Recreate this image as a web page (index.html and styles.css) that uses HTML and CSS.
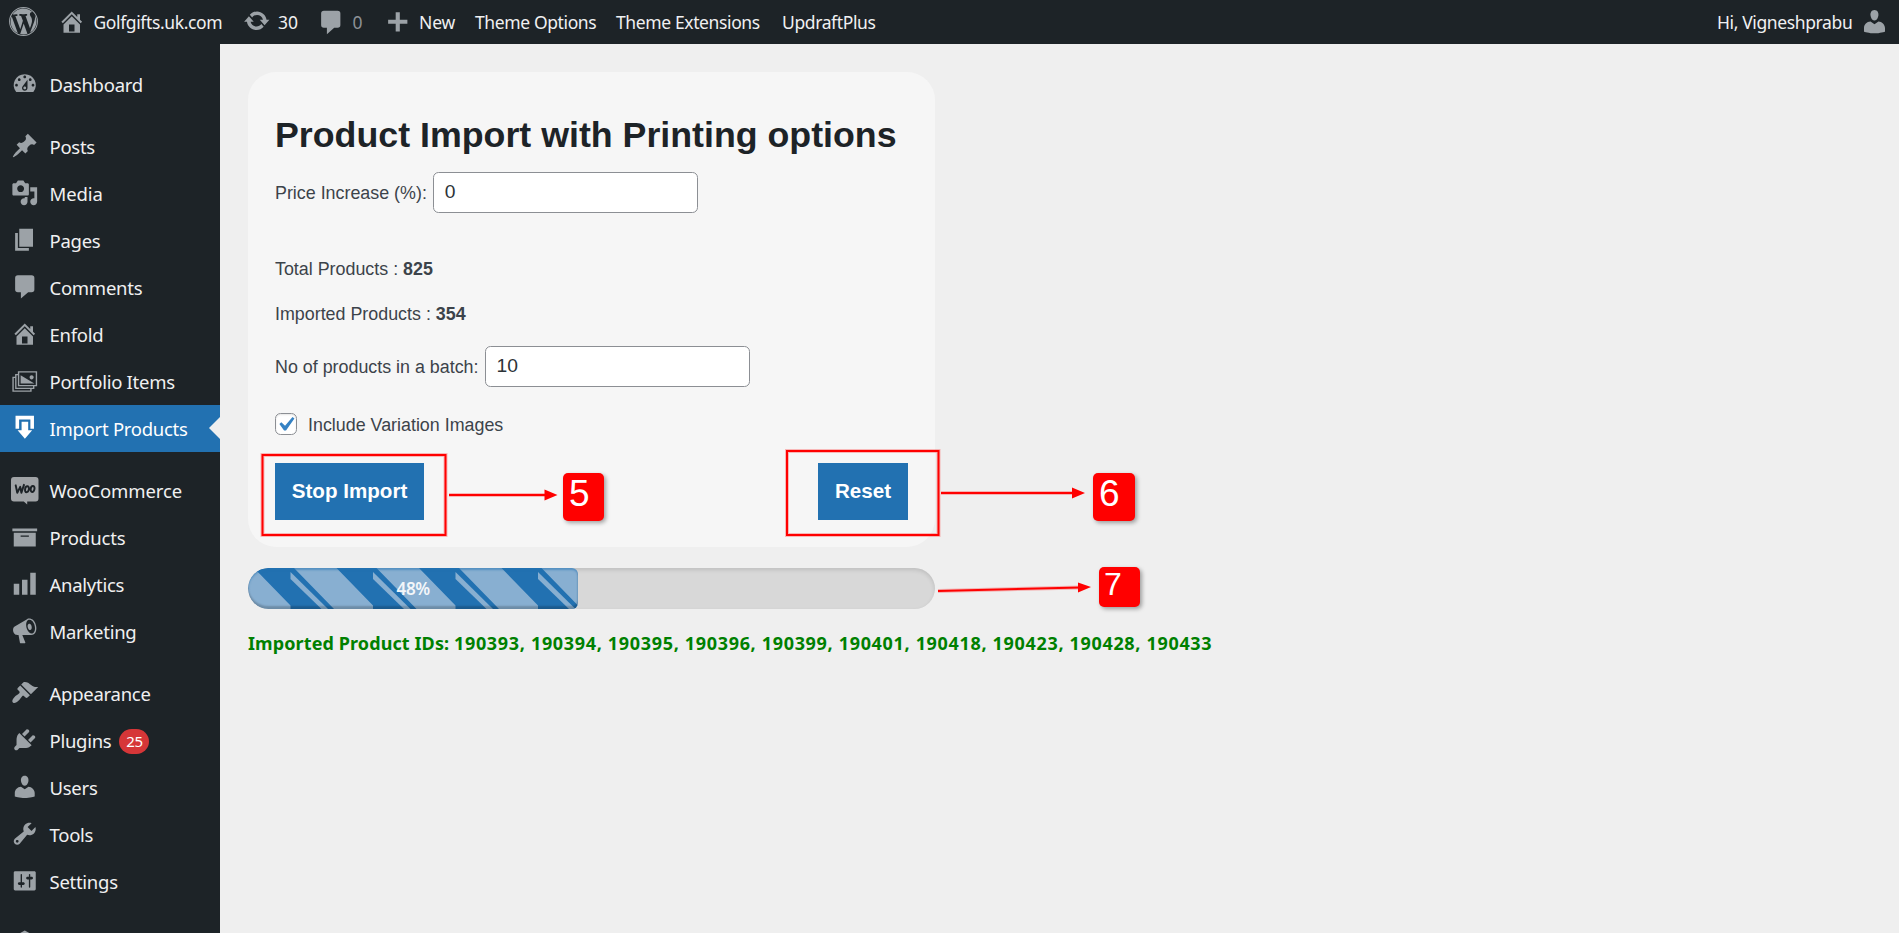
FILE: index.html
```html
<!DOCTYPE html>
<html lang="en"><head><meta charset="utf-8"><title>Product Import</title>
<link rel="stylesheet" href="styles.css"></head>
<body>
<header class="bar">
  <svg class="ico wp" viewBox="0 0 20 20"><circle class="ring" cx="10" cy="10" r="9.600"/><path d="M7.78 15.37L4.37 6.22c.55-.02 1.17-.08 1.17-.08.5-.06.44-1.13-.06-1.11 0 0-1.45.11-2.37.11-.18 0-.37 0-.58-.01C4.12 2.69 6.87 1.11 10 1.11c2.33 0 4.45.87 6.05 2.34-.68-.11-1.65.39-1.65 1.58 0 .74.45 1.36.9 2.1.35.61.55 1.36.55 2.46 0 1.49-1.4 5-1.4 5l-3.03-8.37c.54-.02.82-.17.82-.17.5-.05.44-1.25-.06-1.22 0 0-1.44.12-2.38.12-.87 0-2.33-.12-2.33-.12-.5-.03-.56 1.2-.06 1.22l.92.08 1.26 3.41zM17.41 10c.24-.64.74-1.87.43-4.25.7 1.29 1.05 2.71 1.05 4.25 0 3.29-1.73 6.24-4.4 7.78.97-2.59 1.94-5.2 2.92-7.78zM6.1 18.09C3.12 16.65 1.11 13.53 1.11 10c0-1.3.23-2.48.72-3.59C3.25 10.3 4.67 14.2 6.1 18.09zm4.03-6.63l2.58 6.98c-.86.29-1.76.45-2.71.45-.79 0-1.57-.11-2.29-.33.81-2.38 1.62-4.74 2.42-7.1z"/></svg>
  <svg class="ico home" viewBox="0 0 20 20"><path d="M16 8.5l1.53 1.53-1.06 1.06L10 4.6l-6.47 6.49-1.06-1.06L10 2.5l4 4v-2h2v4zm-6-2.46l6 5.99V18H4v-5.97zM12 17v-5H8v5h4z"/></svg>
  <span class="t site">Golfgifts.uk.com</span>
  <svg class="ico upd" viewBox="0 0 20 20"><path d="M10.2 3.28c3.53 0 6.43 2.61 6.92 6h2.08l-3.5 4-3.5-4h2.32c-.45-1.97-2.21-3.45-4.32-3.45-1.45 0-2.73.71-3.54 1.78L4.95 5.66C6.23 4.2 8.11 3.28 10.2 3.28zm-.4 13.44c-3.52 0-6.43-2.61-6.92-6H.8l3.5-4c1.17 1.33 2.33 2.67 3.5 4H5.48c.45 1.97 2.21 3.45 4.32 3.45 1.45 0 2.73-.71 3.54-1.78l1.71 1.95c-1.28 1.46-3.15 2.38-5.25 2.38z"/></svg>
  <span class="t n30">30</span>
  <svg class="ico com" viewBox="0 0 20 20"><path d="M5 2h10a2 2 0 0 1 2 2v8.4a2 2 0 0 1-2 2h-2.5L7.2 19v-4.6H5a2 2 0 0 1-2-2V4a2 2 0 0 1 2-2z"/></svg>
  <span class="t n0">0</span>
  <svg class="ico plus" viewBox="0 0 20 20"><path d="M17 8.5v3h-5.5V17h-3v-5.500H3v-3h5.500V3h3v5.500z"/></svg>
  <span class="t new">New</span>
  <span class="t opt">Theme Options</span>
  <span class="t ext">Theme Extensions</span>
  <span class="t updraft">UpdraftPlus</span>
  <span class="t hi">Hi, Vigneshprabu</span>
  <svg class="ico me" viewBox="0 0 20 20"><path d="M10 9.25c-2.27 0-2.73-3.44-2.73-3.44C7 4.02 7.82 2 9.97 2c2.16 0 2.98 2.02 2.71 3.81 0 0-.41 3.44-2.68 3.44zm0 2.57L12.72 10c2.39 0 4.52 2.33 4.52 4.53v2.49s-3.65 1.13-7.24 1.13c-3.65 0-7.24-1.13-7.24-1.13v-2.49c0-2.25 1.94-4.48 4.47-4.48z"/></svg>
</header>
<div class="shell">
<nav class="menu">
  <a class="row gap"><svg class="ico" viewBox="0 0 20 20"><path d="M3.76 16h12.48A7.998 7.998 0 0 0 10 3a7.998 7.998 0 0 0-6.24 13zM10 4c.55 0 1 .45 1 1s-.45 1-1 1-1-.45-1-1 .45-1 1-1zM6 6c.55 0 1 .45 1 1s-.45 1-1 1-1-.45-1-1 .45-1 1-1zm8 0c.55 0 1 .45 1 1s-.45 1-1 1-1-.45-1-1 .45-1 1-1zm-5.37 5.55L12 7v6c0 1.1-.9 2-2 2s-2-.9-2-2c0-.57.24-1.080.63-1.45zM4 10c.55 0 1 .45 1 1s-.45 1-1 1-1-.45-1-1 .45-1 1-1zm12 0c.55 0 1 .45 1 1s-.45 1-1 1-1-.45-1-1 .45-1 1-1zm-5 3c0-.55-.45-1-1-1s-1 .45-1 1 .45 1 1 1 1-.45 1-1z"/></svg><span>Dashboard</span></a>
  <a class="row"><svg class="ico" viewBox="0 0 20 20"><path d="M10.44 3.02l1.82-1.82 6.36 6.35-1.83 1.82c-1.05-.68-2.48-.57-3.41.36l-.75.75c-.92.93-1.04 2.35-.35 3.41l-1.83 1.82-2.41-2.41-2.8 2.79c-.42.42-3.38 2.71-3.8 2.29s1.86-3.39 2.28-3.81l2.79-2.79L4.1 9.36l1.83-1.82c1.05.69 2.48.57 3.4-.36l.75-.75c.93-.92 1.05-2.35.36-3.41z"/></svg><span>Posts</span></a>
  <a class="row"><svg class="ico" viewBox="0 0 20 20"><path d="M13 11V4c0-.55-.45-1-1-1h-1.67L9 1H5L3.670 3H2c-.55 0-1 .45-1 1v7c0 .55.45 1 1 1h10c.55 0 1-.45 1-1zM7 4.5c1.38 0 2.5 1.12 2.5 2.5S8.38 9.5 7 9.5 4.5 8.38 4.5 7 5.62 4.5 7 4.5zM14 6h5v10.5c0 1.38-1.12 2.5-2.5 2.5S14 17.88 14 16.5s1.12-2.5 2.5-2.5c.17 0 .34.02.5.05V9h-3V6zm-4 8.05V13h2v3.5c0 1.38-1.12 2.5-2.5 2.5S7 17.88 7 16.5 8.12 14 9.5 14c.17 0 .34.02.5.05z"/></svg><span class="wide">Media</span></a>
  <a class="row"><svg class="ico" viewBox="0 0 20 20"><path d="M6 15V2h10v13H6zm-1 1h8v2H3V5h2v11z"/></svg><span>Pages</span></a>
  <a class="row"><svg class="ico" viewBox="0 0 20 20"><path d="M5 1.600h10a2 2 0 0 1 2 2V12a2 2 0 0 1-2 2h-2.500L7.200 18.600V14H5a2 2 0 0 1-2-2V3.600a2 2 0 0 1 2-2z"/></svg><span>Comments</span></a>
  <a class="row"><svg class="ico" viewBox="0 0 20 20"><path d="M16 8.5l1.53 1.53-1.06 1.06L10 4.6l-6.47 6.49-1.06-1.06L10 2.5l4 4v-2h2v4zm-6-2.46l6 5.99V18H4v-5.97zM12 17v-5H8v5h4z"/></svg><span>Enfold</span></a>
  <a class="row"><svg class="ico" viewBox="0 0 20 20"><path d="M5 3h14v11h-2v2h-2v2H1V7h2V5h2V3zm13 10V4H6v9h12zm-3-4c-.83 0-1.5-.67-1.5-1.5S14.17 6 15 6s1.500.67 1.500 1.500S15.830 9 15 9zM7 6l10 6H7V6zm7 11v-1H3V8H2v9h12zm2-2v-1H5V6H4v9h12z"/></svg><span>Portfolio Items</span></a>
  <a class="row on gap"><svg class="ico" viewBox="0 0 20 20"><path d="M3.300 1.200h13.400v9.600h-2.600V4H5.900v6.800H3.300z"/><path d="M7.700 5.600h4.800v6.200h2.900L10.100 18 4.800 11.800h2.900z"/></svg><span>Import Products</span></a>
  <a class="row"><svg class="ico woo" viewBox="0 0 28 28"><path d="M3 0h22a3 3 0 0 1 3 3v19a3 3 0 0 1-3 3h-8.500v3L13 25H3a3 3 0 0 1-3-3V3a3 3 0 0 1 3-3z"/><path class="woo-mark" d="M4.800 8.500l1.600 7.500 3-6 1.200 6L13.200 8M16.800 9.500c-2.800-.3-3.400 6-1 6s3.600-5.600 1-6zM22.500 9.200c-2.800-.3-3.400 6-1 6s3.600-5.600 1-6z"/></svg><span class="wide">WooCommerce</span></a>
  <a class="row"><svg class="ico" viewBox="0 0 20 20"><path d="M19 4v2H1V4h18zM2 7h16v10H2V7zm11 3V9H7v1h6z"/></svg><span class="wide">Products</span></a>
  <a class="row"><svg class="ico" viewBox="0 0 20 20"><path d="M18 18V2h-4v16h4zm-6 0V7H8v11h4zm-6 0v-8H2v8h4z"/></svg><span>Analytics</span></a>
  <a class="row gap"><svg class="ico" viewBox="0 0 20 20"><path d="M18.15 5.94c.46 1.62.38 3.22-.02 4.48-.42 1.28-1.26 2.18-2.3 2.48-.16.06-.26.06-.4.06-.06.02-.12.02-.18.02-.06.02-.14.02-.22.02h-6.8l2.22 5.5c.02.14-.06.26-.14.34-.08.1-.24.16-.34.16H6.95c-.1 0-.26-.06-.34-.16-.08-.08-.16-.2-.14-.34l-1-5.5H4.25l-.02-.02c-.5.06-1.08-.18-1.54-.62s-.88-1.08-1.06-1.88c-.24-.8-.2-1.56-.02-2.2.18-.62.58-1.08 1.06-1.3l.02-.02 9-5.4c.1-.06.18-.1.24-.16.06-.04.14-.08.24-.12.16-.08.28-.12.5-.18 1.04-.3 2.24.1 3.22.98s1.84 2.24 2.26 3.86zm-2.58 5.98h-.02c.4-.1.74-.34 1.04-.7.58-.7.86-1.76.86-3.04 0-.64-.1-1.3-.28-1.98-.34-1.36-1.02-2.5-1.78-3.24s-1.68-1.1-2.46-.88c-.82.22-1.4.96-1.7 2-.32 1.04-.28 2.36.06 3.72.38 1.36 1 2.5 1.8 3.24.78.74 1.62 1.1 2.48.88zm-2.54-7.08c.22-.04.42-.02.62.04.38.16.76.48 1.02 1s.42 1.2.42 1.78c0 .3-.04.56-.12.8-.18.48-.44.84-.86.94-.34.1-.8-.06-1.14-.4s-.64-.86-.78-1.5c-.18-.62-.12-1.24.02-1.72s.48-.84.82-.94z"/></svg><span>Marketing</span></a>
  <a class="row"><svg class="ico" viewBox="0 0 20 20"><path d="M14.48 11.06L7.41 3.99l1.5-1.5c.5-.56 2.3-.47 3.51.32 1.21.8 1.43 1.28 2.91 2.1 1.18.64 2.45 1.26 4.45.85zm-.71.71L6.7 4.7 4.93 6.47c-.39.39-.39 1.02 0 1.41l1.06 1.06c.39.39.39 1.03 0 1.42-.6.6-1.43 1.11-2.21 1.69-.35.26-.7.53-1.01.84C1.43 14.23.4 16.08 1.4 17.07c.99 1 2.84-.03 4.18-1.36.31-.31.58-.66.85-1.02.57-.78 1.08-1.61 1.69-2.21.39-.39 1.02-.39 1.41 0l1.06 1.06c.39.39 1.02.39 1.41 0z"/></svg><span>Appearance</span></a>
  <a class="row"><svg class="ico" viewBox="0 0 20 20"><path d="M13.11 4.36L9.87 7.6 8 5.73l3.24-3.24c.35-.34 1.05-.2 1.56.32.52.51.66 1.21.31 1.55zm-8 1.77l.91-1.12 9.01 9.01-1.19.84c-.71.71-2.63 1.16-3.82 1.16H6.14L4.9 17.26c-.59.59-1.54.59-2.12 0-.59-.58-.59-1.53 0-2.12l1.24-1.24v-3.88c0-1.13.4-3.19 1.09-3.89zm7.26 3.97l3.24-3.24c.34-.35 1.04-.21 1.55.31.52.51.66 1.21.31 1.55l-3.24 3.25z"/></svg><span>Plugins</span><b class="badge">25</b></a>
  <a class="row"><svg class="ico" viewBox="0 0 20 20"><path d="M10 9.25c-2.27 0-2.73-3.44-2.73-3.44C7 4.02 7.82 2 9.97 2c2.16 0 2.98 2.02 2.71 3.81 0 0-.41 3.44-2.68 3.44zm0 2.57L12.72 10c2.39 0 4.52 2.33 4.52 4.53v2.49s-3.65 1.13-7.24 1.13c-3.65 0-7.24-1.13-7.24-1.13v-2.49c0-2.25 1.94-4.48 4.47-4.48z"/></svg><span>Users</span></a>
  <a class="row"><svg class="ico" viewBox="0 0 20 20"><path d="M16.68 9.77c-1.34 1.34-3.3 1.67-4.95.99l-5.41 6.52c-.99.99-2.59.99-3.58 0s-.99-2.59 0-3.57l6.52-5.42c-.68-1.65-.35-3.61.99-4.95 1.28-1.28 3.12-1.62 4.72-1.06l-2.89 2.89 2.82 2.82 2.86-2.87c.53 1.58.18 3.39-1.08 4.65zM3.81 16.21c.4.39 1.04.39 1.43 0 .4-.4.4-1.04 0-1.43-.39-.4-1.03-.4-1.43 0-.39.39-.39 1.03 0 1.43z"/></svg><span>Tools</span></a>
  <a class="row gap"><svg class="ico" viewBox="0 0 20 20"><path d="M18 16V4c0-.55-.45-1-1-1H3c-.55 0-1 .45-1 1v12c0 .55.45 1 1 1h14c.55 0 1-.45 1-1zM8 11h1c.55 0 1 .45 1 1s-.45 1-1 1H8v1.5c0 .28-.22.5-.5.5s-.5-.22-.5-.5V13H6c-.55 0-1-.45-1-1s.45-1 1-1h1V5.5c0-.28.22-.5.5-.5s.5.22.5.5V11zm5-2h-1c-.55 0-1-.45-1-1s.45-1 1-1h1V5.5c0-.28.22-.5.5-.5s.5.22.5.5V7h1c.55 0 1 .45 1 1s-.45 1-1 1h-1v5.5c0 .28-.22.5-.5.5s-.5-.22-.5-.5V9z"/></svg><span>Settings</span></a>
  <a class="row"><svg class="ico" viewBox="0 0 20 20"><path d="M10 1l7 4v10l-7 4-7-4V5z"/></svg></a>
</nav>
<main class="main">
  <section class="card">
    <h1>Product Import with Printing options</h1>
    <div class="field f1"><label>Price Increase (%):</label><span class="input">0</span></div>
    <p class="stat s1">Total Products : <b>825</b></p>
    <p class="stat s2">Imported Products : <b>354</b></p>
    <div class="field f2"><label>No of products in a batch:</label><span class="input">10</span></div>
    <div class="check"><span class="box"><svg viewBox="0 0 20 20"><path d="M14.830 4.890l1.340.940-5.810 8.380H9.020L5.780 9.670l1.340-1.250 2.570 2.400z"/></svg></span><span>Include Variation Images</span></div>
    <div class="actions"><span class="btn stop">Stop Import</span><span class="btn reset">Reset</span></div>
  </section>
  <div class="track"><div class="fill" style="width:48.1%">
    <svg class="stripes" width="330" height="41" viewBox="0 0 330 41">
      <rect width="330" height="41" fill="#88afd1"/>
      <g id="g1"><path fill="#2271b1" d="M6 0H46L86 41H42.500V37.500z"/><path fill="#88afd1" d="M42.500 4L80 41H73.500L42.500 11z"/></g>
      <use href="#g1" x="82.500"/><use href="#g1" x="165"/><use href="#g1" x="247.500"/></svg>
    <span class="pct">48%</span></div></div>
  <p class="ids">Imported Product IDs: <span class="list">190393, 190394, 190395, 190396, 190399, 190401, 190418, 190423, 190428, 190433</span></p>
</main>
</div>
<svg class="notes" width="1899" height="933" viewBox="0 0 1899 933">
  <g class="halo"><rect x="262.500" y="455" width="183" height="80"/><rect x="787" y="451" width="151.500" height="84"/><path d="M449 495h96M941 493h132M938 591l142-3.500"/></g>
  <g class="line"><rect x="262.500" y="455" width="183" height="80"/><rect x="787" y="451" width="151.500" height="84"/><path d="M449 495h96M941 493h132M938 591l142-3.500"/></g>
  <path class="head" d="M544.500 489.500l13 5.500-13 5.500zM1072 487.500l13 5.500-13 5.500zM1078 582.500l13 4.500-13 5.500z"/>
</svg>
<b class="num n5">5</b><b class="num n6">6</b><b class="num n7">7</b>
</body></html>
```
FILE: styles.css
```css
* { box-sizing: border-box; }
body { margin: 0; width: 1899px; height: 933px; overflow: hidden; position: relative; background: #efefef; font-family: "Noto Sans", sans-serif; }
.bar { height: 44px; background: #1d2327; display: flex; align-items: center; color: #f0f0f1; font-size: 17.5px; letter-spacing: -.38px; white-space: nowrap; }
.ico { width: 27.5px; height: 27.5px; fill: #9ca2a7; flex: none; display: block; }
.t { line-height: 44px; height: 44px; flex: none; }
.bar .ico { margin-bottom: 1px; }
.bar .wp { width: 29px; height: 29px; margin-left: 9px; margin-bottom: 2px; }
.ring { fill: none; stroke: #9ca2a7; stroke-width: .7; }
.home { margin-left: 20px; }
.site { margin-left: 8px; width: 129px; }
.upd { margin-left: 20px; }
.bar .upd { margin-bottom: 2px; }
.n30 { margin-left: 8px; width: 20px; letter-spacing: 0; }
.com { margin-left: 19px; }
.n0 { margin-left: 8px; width: 20px; color: #8c9196; }
.plus { margin-left: 11px; }
.new { margin-left: 8px; width: 36px; letter-spacing: -.1px; }
.opt { margin-left: 20px; width: 121px; }
.ext { margin-left: 20px; width: 142px; }
.updraft { margin-left: 24px; width: 93px; }
.hi { margin-left: auto; width: 135px; }
.me { margin: 0 10px 0 8px; }
.bar .me { width: 29px; height: 29px; margin-bottom: 2px; }
.shell { display: flex; height: 889px; overflow: hidden; }
.menu { width: 220px; height: 889px; background: #1d2327; padding-top: 17px; flex: none; color: #f0f0f1; font-size: 18.5px; letter-spacing: -.27px; overflow: hidden; }
.row { display: flex; height: 47px; padding: 8px 0 0 11px; position: relative; white-space: nowrap; }
.row .ico { margin-top: 1px; }
.row span { margin-left: 11px; line-height: 32px; }
.row .wide { letter-spacing: -.1px; }
.gap { margin-bottom: 15px; }
.on { background: #2271b1; color: #fff; }
.on .ico { fill: #fff; }
.on::after { content: ""; position: absolute; right: 0; top: 12px; border: 11px solid transparent; border-left: 0; border-right-color: #efefef; }
.row .woo { fill: #a0a3a6; margin-top: 2px; }
.woo-mark { fill: none; stroke: #1d2327; stroke-width: 2; stroke-linejoin: round; stroke-linecap: round; }
.badge { margin: 4px 0 0 8px; width: 30px; height: 25px; border-radius: 12.5px; background: #d63638; color: #fff; font-weight: 400; font-size: 15px; line-height: 25px; text-align: center; }
.main { padding: 28px 0 0 28px; flex: 1; }
.card { width: 687px; height: 475px; padding: 37px 27px 0; border-radius: 28px; background: #f6f6f6; color: #3c434a; font: 17.87px/24px "Liberation Sans", sans-serif; }
h1 { margin: 0; color: #1d2327; font-size: 35.75px; line-height: 52px; white-space: nowrap; }
.field { display: flex; align-items: center; height: 42px; white-space: nowrap; }
.input { width: 265px; height: 41px; border: 1px solid #8c8f94; border-radius: 5.500px; background: #fff; padding: 0 11px; line-height: 37px; font-size: 19.25px; color: #2c3338; position: relative; top: -1px; }
.f1 { margin-top: 11px; }
.f1 .input, .f2 .input { margin-left: 6px; }
.stat { margin: 0; }
.s1 { margin-top: 43px; }
.s2 { margin-top: 21px; }
.f2 { margin-top: 20px; }
.check { display: flex; align-items: center; margin-top: 25px; height: 24px; gap: 11px; }
.box { width: 22px; height: 22px; border: 1px solid #8c8f94; border-radius: 5.500px; background: #fff; margin-top: -3px; box-shadow: inset 0 1px 2px rgba(0,0,0,.1); }
.box svg { width: 29px; height: 29px; margin: -4px 0 0 -5px; display: block; fill: #3582c4; }
.actions { display: flex; justify-content: space-between; margin-top: 26px; }
.btn { height: 57px; background: #2271b1; color: #fff; font-weight: 700; font-size: 20.6px; line-height: 56px; text-align: center; }
.stop { width: 149px; }
.reset { width: 90px; }
.track { width: 687px; height: 41px; margin-top: 21px; border-radius: 20.500px; background: #d8d8d8; overflow: hidden; box-shadow: inset 0 2px 4px rgba(0,0,0,.12); }
.fill { height: 41px; position: relative; overflow: hidden; border-radius: 20px 6px 6px 20px; }
.fill::after { content: ""; position: absolute; inset: 0; border-radius: inherit; box-shadow: inset 0 -3px 2px rgba(0,0,0,.2), inset 0 2px 2px rgba(34,113,177,.5); }
.stripes { display: block; }
.pct { position: absolute; inset: 0; line-height: 42px; text-align: center; color: #f3f6f9; font-size: 17px; font-weight: 600; letter-spacing: -.3px; }
.ids { margin: 20px 0 0; color: #008000; font-weight: 700; font-size: 18px; line-height: 28px; white-space: nowrap; letter-spacing: .1px; }
.list { letter-spacing: .67px; }
.notes { position: absolute; left: 0; top: 0; }
.line { fill: none; stroke: #f00; stroke-width: 2; }
.halo { fill: none; stroke: rgba(255,0,0,.25); stroke-width: 4; }
.head { fill: #f00; }
.num { position: absolute; background: #f00; color: #fff; border-radius: 5px; font: 400 37px/41px "Liberation Sans", sans-serif; padding-left: 6px; box-shadow: 2px 2px 4px rgba(0,0,0,.35); }
.n5 { left: 563px; top: 473px; width: 41px; height: 48px; }
.n6 { left: 1093px; top: 473px; width: 42px; height: 48px; }
.n7 { left: 1099px; top: 567px; width: 41px; height: 40px; font-size: 32px; line-height: 35px; padding-left: 5px; }
```
